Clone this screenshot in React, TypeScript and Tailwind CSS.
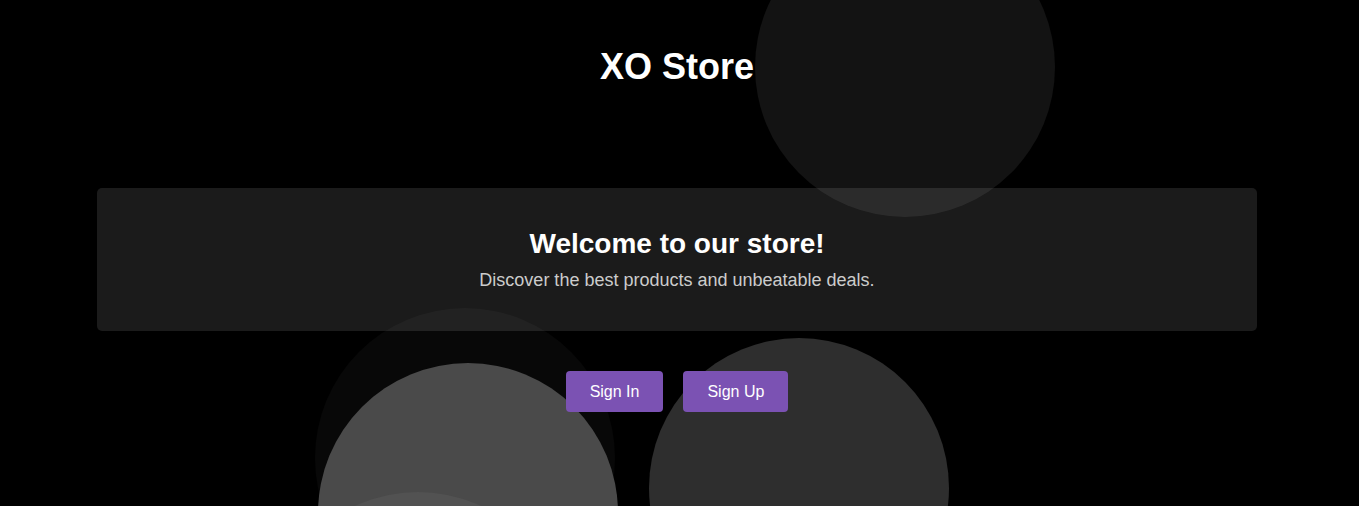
import React from 'react';

const bubbles = [
    { pos: 'left-[755px] top-[-83px]', color: 'bg-white/[0.075]' },
    { pos: 'left-[315px] top-[308px]', color: 'bg-white/[0.03]' },
    { pos: 'left-[318px] top-[363px]', color: 'bg-[#4a4a4a]' },
    { pos: 'left-[268px] top-[492px]', color: 'bg-[#525252]' },
    { pos: 'left-[649px] top-[338px]', color: 'bg-[#2e2e2e]' },
];

const App = () => {
    return (
        <div className="relative h-[506px] w-full overflow-hidden bg-black font-['Liberation_Sans',Arial,sans-serif] text-white">
            {/* Floating bubbles */}
            {bubbles.map((b, i) => (
                <div
                    key={i}
                    className={`pointer-events-none absolute z-10 h-[300px] w-[300px] rounded-full ${b.pos} ${b.color}`}
                ></div>
            ))}

            <div className="flex flex-col items-center pr-[5px]">
                {/* Header */}
                <h1 className="mt-[47px] text-[36px] font-bold leading-[40px]">XO Store</h1>

                {/* Hero card */}
                <div className="mt-[101px] flex w-[1160px] flex-col items-center rounded-[5px] bg-[#1b1b1b] py-10">
                    <h2 className="text-[28px] font-bold leading-[32px]">Welcome to our store!</h2>
                    <p className="mt-2.5 text-[18px] leading-[21px] text-[#cccccc]">
                        Discover the best products and unbeatable deals.
                    </p>
                </div>

                {/* Actions */}
                <div className="relative z-20 mt-10 flex gap-5">
                    <button className="rounded-[4px] bg-[#7b52b3] px-6 py-2.5 text-[16px] leading-[21px] text-white">
                        Sign In
                    </button>
                    <button className="rounded-[4px] bg-[#7b52b3] px-6 py-2.5 text-[16px] leading-[21px] text-white">
                        Sign Up
                    </button>
                </div>
            </div>
        </div>
    );
};

export default App;
